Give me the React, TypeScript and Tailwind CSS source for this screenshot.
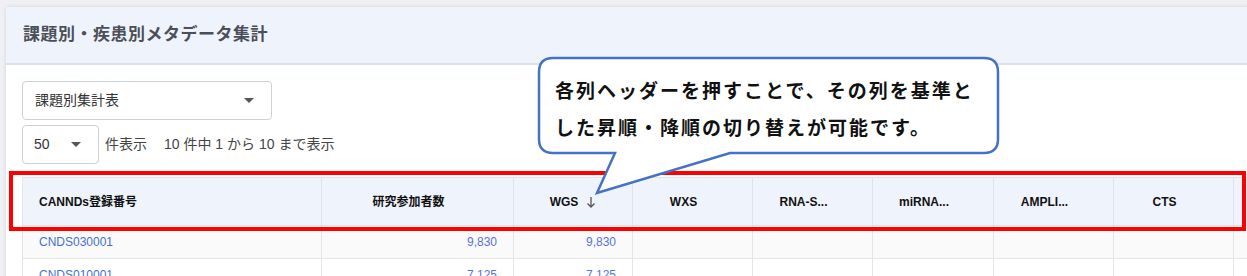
import React from 'react';

const cols = ['CANNDs登録番号', '研究参加者数', 'WGS', 'WXS', 'RNA-S...', 'miRNA...', 'AMPLI...', 'CTS', ''];

const rows = [
    ['CNDS030001', '9,830', '9,830'],
    ['CNDS010001', '7,125', '7,125'],
];

const grid = 'grid grid-cols-[299px_192px_119px_120px_120px_121px_120px_120px_120px]';

function Caret() {
    return <span className="inline-block w-0 h-0 border-l-[5px] border-r-[5px] border-t-[5px] border-l-transparent border-r-transparent border-t-[#555]" />;
}

function SortArrow({ show }: { show: boolean }) {
    return (
        <svg width="10" height="12" viewBox="0 0 10 12" className={`ml-[8px] ${show ? '' : 'invisible'}`}>
            <path d="M5 1 V11 M1.5 7.5 L5 11 L8.5 7.5" fill="none" stroke="#555" strokeWidth="1.3" />
        </svg>
    );
}

export default function App() {
    return (
        <div
            className="relative w-[1247px] h-[276px] overflow-hidden bg-[#eef0f3] pt-[7px] pl-[6px]"
            style={{ fontFamily: '"Liberation Sans", "Noto Sans CJK JP", sans-serif' }}
        >
            <div className="w-[1300px] h-[300px] bg-white rounded-tl-[3px] shadow-[0_0_4px_rgba(0,0,0,0.12)]">
                <div className="h-[58px] bg-[#eff4fc] border-b-2 border-[#dae2ee] flex items-center pl-[17px]">
                    <h2 className="text-[17px] font-bold text-[#4b5058] tracking-[0.5px]">課題別・疾患別メタデータ集計</h2>
                </div>

                <div className="pl-[16px] pt-[16px]">
                    <div className="w-[250px] h-[39px] border border-[#ccd1d6] rounded-[4px] flex items-center justify-between pl-[12px] pr-[17px] text-[14px] text-[#333]">
                        <span>課題別集計表</span>
                        <Caret />
                    </div>

                    <div className="mt-[5px] flex items-center text-[14px] text-[#444]">
                        <div className="w-[77px] h-[39px] border border-[#ccd1d6] rounded-[4px] flex items-center pl-[11px] gap-[21px] text-[#333]">
                            <span>50</span>
                            <Caret />
                        </div>
                        <span className="ml-[6px]">件表示</span>
                        <span className="ml-[17px]">10 件中 1 から 10 まで表示</span>
                    </div>

                    <div className="mt-[13px] border-t border-l border-[#e2e5e9]">
                        <div className={`${grid} h-[48px] bg-[#eff4fc] border-b border-[#dfe3e8]`}>
                            {cols.map((c, i) => (
                                <div
                                    key={i}
                                    className={`flex items-center border-r border-[#dfe3e8] text-[12px] font-bold text-[#111] ${i === 0 ? 'pl-[16px]' : 'justify-center'}`}
                                >
                                    <span>{c}</span>
                                    {i > 0 && c && <SortArrow show={i === 2} />}
                                </div>
                            ))}
                        </div>
                        {rows.map((r, ri) => (
                            <div key={ri} className={`${grid} h-[33px] border-b border-[#e4e6e9] ${ri === 0 ? 'bg-[#fafafa]' : 'bg-white'}`}>
                                {cols.map((_, i) => (
                                    <div
                                        key={i}
                                        className={`flex items-center border-r border-[#e4e6e9] text-[12px] ${i === 0 ? 'pl-[16px] text-[#4470d6]' : 'justify-end pr-[16px] text-[#5a72e0]'}`}
                                    >
                                        {r[i] ?? ''}
                                    </div>
                                ))}
                            </div>
                        ))}
                    </div>
                </div>
            </div>

            {/* annotation: red frame */}
            <div className="absolute left-[9px] top-[171px] w-[1237px] h-[60px] border-4 border-[#ff0000]" />

            {/* annotation: callout */}
            <svg className="absolute left-0 top-0" width="1247" height="276">
                <path
                    d="M 553 58 H 984 Q 998 58 998 72 V 139 Q 998 153 984 153 H 730 L 597 193 L 615 153 H 553 Q 539 153 539 139 V 72 Q 539 58 553 58 Z"
                    fill="#ffffff"
                    stroke="#4472c4"
                    strokeWidth="2.5"
                    strokeLinejoin="miter"
                />
            </svg>
            <div
                className="absolute left-[555px] top-[71px] text-[19px] leading-[37px] font-bold text-[#111] tracking-[2px]"
                style={{ fontFamily: '"Noto Sans CJK JP", sans-serif' }}
            >
                <div>各列ヘッダーを押すことで、その列を基準と</div>
                <div>した昇順・降順の切り替えが可能です。</div>
            </div>
        </div>
    );
}
